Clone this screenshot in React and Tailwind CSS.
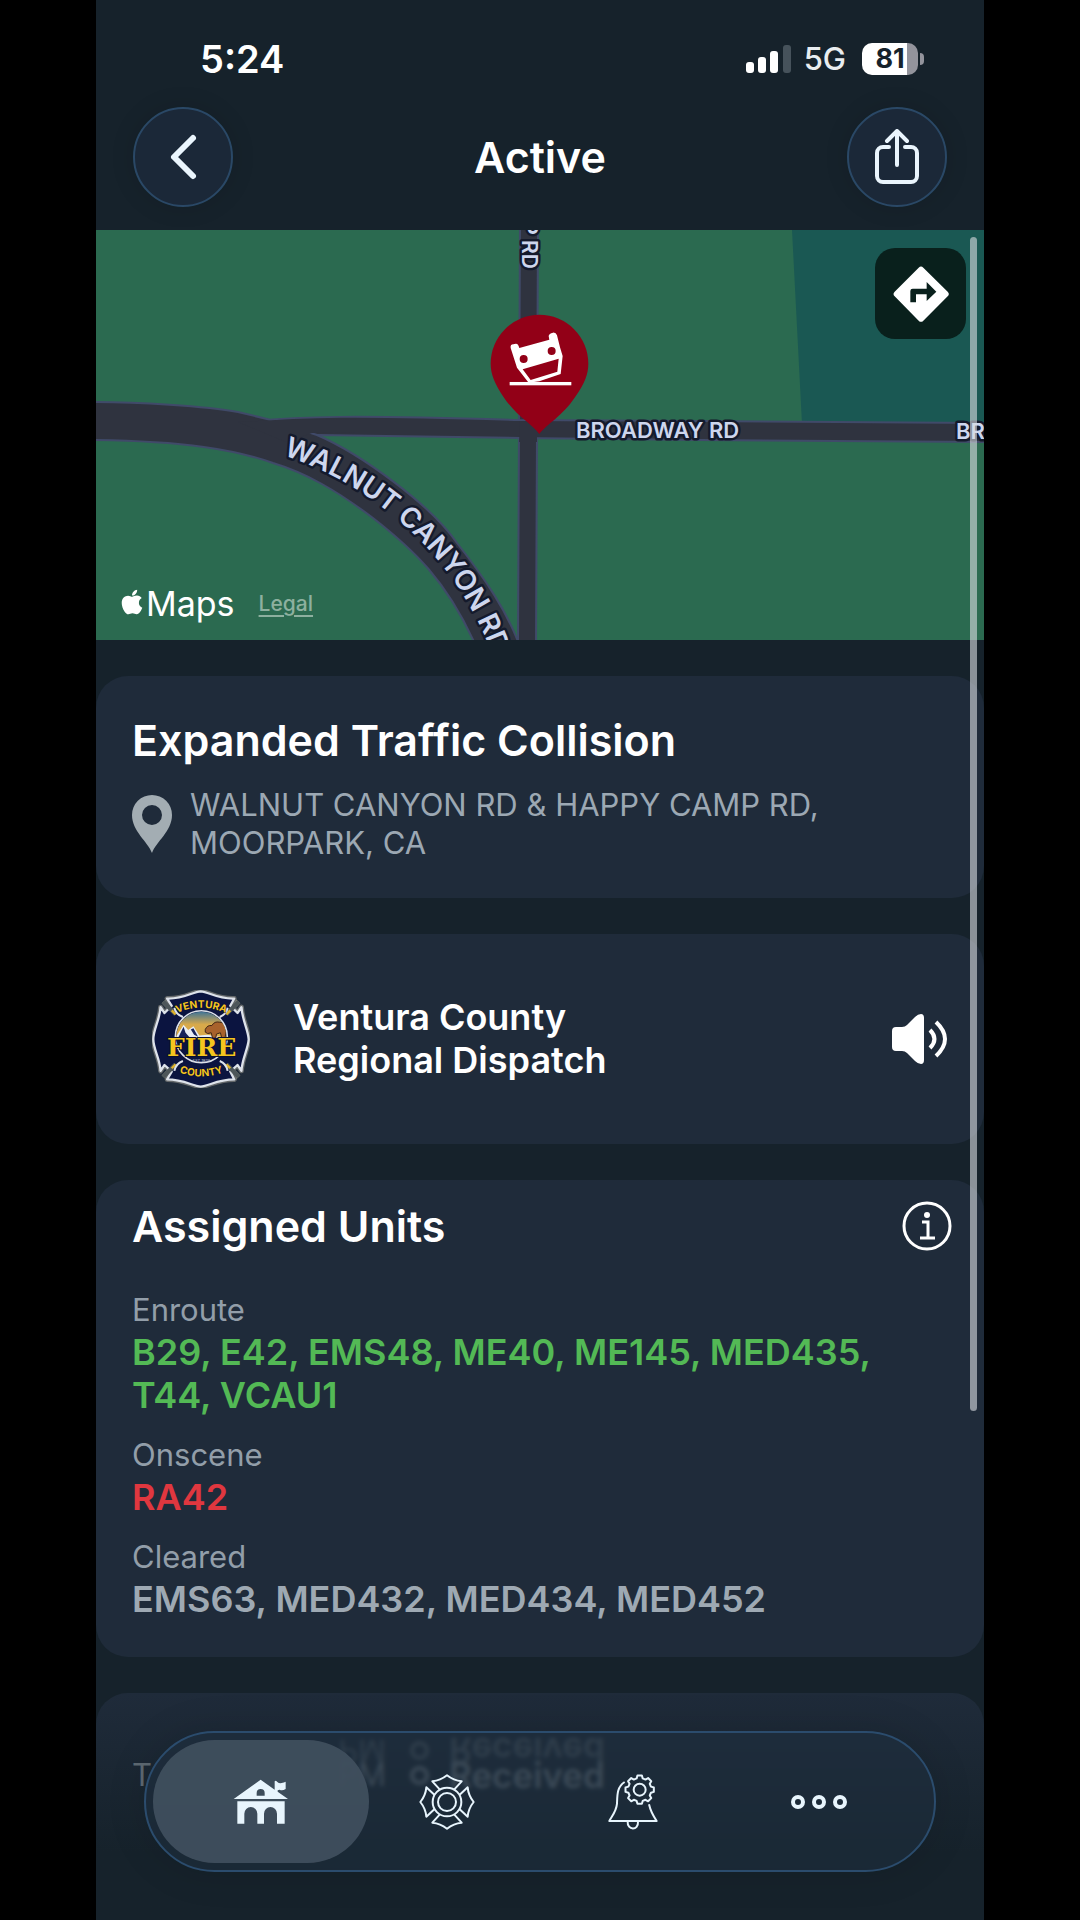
import { FaApple } from "react-icons/fa";

const GREEN = "#2b6a50";
const ROAD = "#2f333f";
const KERB = "#404a69";

function StatusBar() {
  return (
    <div className="flex h-8 items-center justify-between pr-[60px] pl-[104px]">
      <span className="text-[38px] leading-8 font-semibold">5:24</span>
      <div className="flex items-center">
        <svg className="h-[30px] w-[46px]" viewBox="0 0 46 30" fill="#fff" aria-label="Signal">
          <rect x="0" y="18" width="8" height="11" rx="3" />
          <rect x="12" y="13" width="8" height="16" rx="3" />
          <rect x="24" y="7" width="8" height="22" rx="3" />
          <rect x="37" y="1" width="8" height="28" rx="3" fill="#46525b" />
        </svg>
        <span className="ml-3 text-[31px] leading-8 font-medium text-[#e9edf0]">5G</span>
        <div className="ml-4 flex items-center gap-0.5">
          <div className="flex h-8 w-14 items-center justify-center rounded-[10px] bg-linear-to-r from-white from-81% to-[#93949c] to-81%">
            <span className="text-[27px] leading-8 font-bold text-[#16222b]">81</span>
          </div>
          <div className="h-3 w-1 rounded-r-full bg-[#93949c]" />
        </div>
      </div>
    </div>
  );
}

function RoundButton({ label, children }) {
  return (
    <button
      type="button"
      aria-label={label}
      className="flex size-[100px] items-center justify-center rounded-full border-2 border-[#2a4866] bg-[#1b2838] shadow-[0_0_24px_rgba(0,0,0,0.12)]"
    >
      {children}
    </button>
  );
}

function Header() {
  return (
    <header className="shrink-0 pt-[43px] pb-[23px]">
      <StatusBar />
      <div className="mt-8 flex items-center justify-between px-[37px]">
        <RoundButton label="Back">
          <svg className="h-12 w-8" viewBox="0 0 32 48" fill="none" stroke="#eaf5fd" strokeWidth="6" strokeLinecap="round" strokeLinejoin="round">
            <path d="M26 5 L7 24 L26 43" />
          </svg>
        </RoundButton>
        <h1 className="text-[43px] leading-[50px] font-semibold">Active</h1>
        <RoundButton label="Share">
          <svg className="h-14 w-11" viewBox="0 0 44 56" fill="none" stroke="#eaf5fd" strokeWidth="4" strokeLinecap="round" strokeLinejoin="round">
            <path d="M14 18 H8 a6 6 0 0 0 -6 6 V47 a6 6 0 0 0 6 6 H36 a6 6 0 0 0 6 -6 V24 a6 6 0 0 0 -6 -6 H30" />
            <path d="M22 36 V3 M12 12 L22 2 L32 12" />
          </svg>
        </RoundButton>
      </div>
    </header>
  );
}

function MapView() {
  const label = {
    fill: "#cdd6ee",
    stroke: "#141a2c",
    strokeWidth: 5,
    strokeLinejoin: "round",
    paintOrder: "stroke",
    fontWeight: 600,
  };
  return (
    <section className="relative h-[410px] shrink-0 overflow-hidden" aria-label="Incident map">
      <svg className="block h-full w-full" viewBox="0 0 888 410" preserveAspectRatio="xMidYMid slice">
        <rect width="888" height="410" fill={GREEN} />
        <path d="M696 0 H888 V194 H706 Z" fill="#1a5853" />
        <g fill={ROAD} stroke={KERB} strokeWidth="2">
          <path d="M424 -4 H442 L440 414 H422 Z" />
          <path d="M150 192 C200 186 260 185 424 190 L604 191 L892 193 V212 L604 210 L424 208 L221 205 L150 215 Z" />
          <path d="M-4 172 C40 172 110 176 142 182 L171 189 L221 205 C265 224 335 275 361 313 C390 350 410 380 423 414 L379 414 C350 350 318 320 277 288 C240 260 210 243 177 233 C140 220 90 211 -4 210 Z" />
        </g>
        <path d="M142 192 L180 190 L260 189 V202 L216 203 L190 212 Z" fill={ROAD} />
        <path d="M424 191 L441 191 V212 L423 212 Z" fill={ROAD} />
        <path id="walnut" d="M186 225 C260 248 325 300 364 360 Q388 398 402 440" fill="none" />
        <text {...label} fontSize="28">
          <textPath href="#walnut" startOffset="1">WALNUT CANYON RD</textPath>
        </text>
        <text {...label} fontSize="22" x="480" y="208">BROADWAY RD</text>
        <text {...label} fontSize="22" x="860" y="209">BROADWAY RD</text>
        <text {...label} fontSize="21" textAnchor="end" transform="translate(426 39) rotate(90)">HAPPY CAMP RD</text>
        <g transform="translate(364 -10) scale(.3333)">
          <path d="M238 642 C214 610 170 590 130 530 C104 490 92 462 92 431 A146.500 146.500 0 0 1 385 431 C385 462 374 490 346 530 C306 590 262 610 238 642 Z" fill="#920017" />
          <path
            fillRule="evenodd"
            fill="#fff"
            d="M152 384 Q150 374 160 373 L168 371 Q175 371 178 384 L268 359 L266 348 Q267 341 279 338 Q288 337 291 346 L300 382 L308 408 L302 462 L238 484 L206 488 L171 443 Z M179 417 a12 12 0 1 0 24 0 a12 12 0 1 0 -24 0 Z M263 393 a12 12 0 1 0 24 0 a12 12 0 1 0 -24 0 Z M188 448 L296 416 L292 455 L212 480 Z"
          />
          <rect x="149" y="486" width="185" height="10" fill="#fff" />
        </g>
      </svg>

      <button type="button" aria-label="Directions" className="absolute top-[18px] right-[18px] flex size-[91px] items-center justify-center rounded-[20px] bg-[#09201c]">
        <svg className="size-14" viewBox="576 136 168 168">
          <path d="M653 141 Q660 134 667 141 L740 213 Q747 220 740 227 L667 300 Q660 307 653 300 L581 227 Q574 220 581 213 Z" fill="#fff" />
          <path d="M628 245 V211 Q628 204 635 204 H677 V184 L706 213 L677 241 V221 H645 V245 Z" fill="#09201c" />
        </svg>
      </button>

      <div className="absolute bottom-4 left-[22px] flex items-center">
        <FaApple className="-mt-1 size-7 text-white" />
        <span className="text-[34px] leading-10">Maps</span>
        <a href="#legal" className="ml-6 text-[21px] leading-6 font-medium text-[#8db09f] underline underline-offset-4">Legal</a>
      </div>
    </section>
  );
}

function Card({ className, children }) {
  return <section className={"shrink-0 rounded-[32px] bg-[#1f2b3a] " + className}>{children}</section>;
}

function IncidentCard() {
  return (
    <Card className="px-9 pt-[38px] pb-9">
      <h2 className="text-[43px] leading-[52px] font-semibold">Expanded Traffic Collision</h2>
      <div className="mt-5 flex items-center gap-[18px]">
        <svg className="h-[58px] w-10 shrink-0" viewBox="0 0 40 58" fill="#a3adb3">
          <path fillRule="evenodd" d="M20 58 C16 47 0 36 0 20 A20 20 0 0 1 40 20 C40 36 24 47 20 58 Z M10 20 a10 10 0 1 0 20 0 a10 10 0 1 0 -20 0 Z" />
        </svg>
        <p className="max-w-[660px] text-[31px] leading-[38px] text-[#9ca8b3]">
          WALNUT CANYON RD &amp; HAPPY CAMP RD, MOORPARK, CA
        </p>
      </div>
    </Card>
  );
}

function DepartmentBadge() {
  const shape =
    "M180 34 C205 36 232 58 282 56 L270 78 L292 100 L304 82 C306 120 324 150 326 180 C324 210 306 238 304 276 L292 258 L270 278 L282 302 C232 302 205 322 180 324 C155 322 128 302 78 302 L92 278 L70 258 L58 276 C56 238 36 210 36 180 C36 150 56 120 58 82 L70 100 L92 78 L78 56 C128 58 155 36 180 34 Z";
  const gold = { fill: "#f5c51e", fontWeight: 700, textAnchor: "middle", stroke: "#0a1030", strokeWidth: 3, paintOrder: "stroke" };
  return (
    <svg className="size-[98px] shrink-0" viewBox="32 30 298 298" role="img" aria-label="Ventura County Fire">
      <defs>
        <linearGradient id="sky" x1="0" y1="0" x2="0" y2="1">
          <stop offset="0" stopColor="#2f6f9f" />
          <stop offset="0.5" stopColor="#d8a94a" />
        </linearGradient>
        <clipPath id="seal">
          <circle cx="182" cy="172" r="76" />
        </clipPath>
      </defs>
      <path d="M70 62 L292 298 M292 62 L70 298" stroke="#7c8075" strokeWidth="24" />
      <path d={shape} fill="none" stroke="#65696b" strokeWidth="15" strokeLinejoin="round" />
      <path d={shape} fill="#0b1440" stroke="#dde2ea" strokeWidth="7" strokeLinejoin="round" />
      <path d="M66 66 L104 104 M296 66 L258 104 M66 294 L104 256 M296 294 L258 256" stroke="#4d565a" strokeWidth="13" />
      <path d="M92 92 L104 104 M270 92 L258 104 M92 268 L104 256 M270 268 L258 256" stroke="#e0b32a" strokeWidth="7" />
      <path d="M100 84 Q104 104 126 112 M262 84 Q258 104 238 112 M100 276 Q104 254 126 246 M262 276 Q258 254 238 246" fill="none" stroke="#dde2ea" strokeWidth="6" />
      <circle cx="182" cy="172" r="79" fill="#0b1440" stroke="#dde2ea" strokeWidth="5" />
      <g clipPath="url(#seal)">
        <rect x="100" y="92" width="164" height="86" fill="url(#sky)" />
        <path d="M100 180 L128 136 L142 152 L158 140 L176 168 L200 166 L262 176 V182 H100 Z" fill="#e9eef5" />
        <path d="M110 178 L128 142 L134 160 L146 174 Z M150 150 L158 146 L172 172 L160 166 Z" fill="#17235a" />
        <path d="M194 150 Q200 136 214 138 Q222 124 238 128 Q258 128 258 154 L254 176 H244 L240 160 L228 164 L226 176 H216 L212 160 Q200 166 194 158 Z" fill="#a8622c" stroke="#3d2415" strokeWidth="3" />
        <path d="M100 176 H264 V190 H100 Z" fill="#0b1440" />
      </g>
      <path id="badgeTop" d="M104 102 Q182 66 260 102" fill="none" />
      <path id="badgeBottom" d="M100 274 Q182 312 264 274" fill="none" />
      <text {...gold} fontSize="31">
        <textPath href="#badgeTop" startOffset="50%">VENTURA</textPath>
      </text>
      <text {...gold} fontSize="31">
        <textPath href="#badgeBottom" startOffset="50%">COUNTY</textPath>
      </text>
      <text {...gold} x="183" y="231" fontSize="76" fontFamily="'DejaVu Serif', serif" strokeWidth="6">FIRE</text>
      <text x="182" y="249" fontSize="12" fontStyle="italic" fill="#c7cddb" textAnchor="middle">EST 1928</text>
    </svg>
  );
}

function DispatchCard() {
  return (
    <Card className="flex items-center pr-9 pl-14">
      <div className="flex h-[210px] flex-1 items-center gap-[43px]">
        <DepartmentBadge />
        <p className="max-w-[350px] text-[36px] leading-[43px] font-semibold">Ventura County Regional Dispatch</p>
      </div>
      <button type="button" aria-label="Listen to dispatch audio">
        <svg className="h-[50px] w-14" viewBox="0 0 56 50">
          <path d="M0 17 Q0 13 4 13 H10 Q13 13 15 11 L23 3 Q26 0 29 0 Q32 0 32 4 V46 Q32 50 29 50 Q26 50 23 47 L15 39 Q13 37 10 37 H4 Q0 37 0 33 Z" fill="#fff" />
          <path d="M38 16 Q47 25 38 34 M44 8 Q62 25 44 42" fill="none" stroke="#fff" strokeWidth="4" />
        </svg>
      </button>
    </Card>
  );
}

const GROUPS = [
  { title: "Enroute", units: "B29, E42, EMS48, ME40, ME145, MED435, T44, VCAU1", color: "text-[#53b955]" },
  { title: "Onscene", units: "RA42", color: "text-[#e0373f]" },
  { title: "Cleared", units: "EMS63, MED432, MED434, MED452", color: "text-[#9ea9b3]" },
];

function UnitsCard() {
  return (
    <Card className="px-9 pt-5 pb-9">
      <div className="flex items-center justify-between">
        <h2 className="text-[43px] leading-[52px] font-semibold">Assigned Units</h2>
        <button type="button" aria-label="About assigned units" className="-mr-1">
          <svg className="size-[50px]" viewBox="0 0 50 50" fill="none" stroke="#fff" strokeWidth="3">
            <circle cx="25" cy="25" r="23" />
            <circle cx="25" cy="14" r="3" fill="#fff" stroke="none" />
            <path d="M20 21 H26 V37 M18 37 H33" />
          </svg>
        </button>
      </div>
      <dl className="mt-9 flex flex-col gap-4">
        {GROUPS.map((g) => (
          <div key={g.title}>
            <dt className="text-[31px] leading-[43px] text-[#929ea9]">{g.title}</dt>
            <dd className={"max-w-[760px] text-[36px] leading-[43px] font-semibold " + g.color}>{g.units}</dd>
          </div>
        ))}
      </dl>
    </Card>
  );
}

function TimelineRow({ reflected }) {
  return (
    <div className="flex h-10 items-center leading-10">
      <div className="flex w-[254px] justify-between">
        <span>{reflected ? "" : "T"}</span>
        <span>PM</span>
      </div>
      <span className="ml-6 size-[19px] rounded-full border-4 border-current" />
      <span className="ml-5 text-[35px] font-semibold">Received</span>
    </div>
  );
}

function TimelineCard() {
  return (
    <section className="h-[226px] shrink-0 rounded-t-[32px] bg-linear-to-b from-[#1f2b3a] to-[#16222b] to-70% px-9 pt-[38px] text-[31px] text-[#5d6972]">
      <div className="-scale-y-100 opacity-60" aria-hidden="true">
        <TimelineRow reflected />
      </div>
      <div className="-mt-4">
        <TimelineRow />
      </div>
    </section>
  );
}

function StationIcon() {
  return (
    <svg className="h-[46px] w-14" viewBox="341 192 168 138" fill="#e8f5fd">
      <path fillRule="evenodd" d="M343 252 L424 194 L466 224 V199 Q470 195 473 200 Q480 206 487 204 Q494 203 499 200 V222 Q488 229 481 224 L475 226 V230 L506 252 Z M412 242 H436 V234 A12 12 0 0 0 412 234 Z" />
      <path d="M354 259 H496 V326 H473 V296 A19.500 20 0 0 0 434 296 V326 H414 V296 A19.500 20 0 0 0 375 296 V326 H354 Z" />
    </svg>
  );
}

function MalteseIcon() {
  return (
    <svg className="size-14" viewBox="268 176 168 168" fill="none" stroke="#e8f5fd" strokeWidth="6" strokeLinejoin="round">
      <circle cx="352" cy="260" r="43" />
      <circle cx="352" cy="260" r="27" />
      {[0, 90, 180, 270].map((a) => (
        <path key={a} transform={`rotate(${a} 352 260)`} d="M330 222 L308 198 Q332 196 352 180 Q372 196 396 198 L374 222" />
      ))}
    </svg>
  );
}

const GEAR = Array.from({ length: 8 }, (_, i) =>
  [[-15, 35], [-9, 43], [9, 43], [15, 35]].map(([deg, r], j) => {
    const t = ((i * 45 + deg) * Math.PI) / 180;
    return `${i || j ? "L" : "M"}${(330 + r * Math.sin(t)).toFixed(1)} ${(358 - r * Math.cos(t)).toFixed(1)}`;
  }).join(" ")
).join(" ") + " Z";

function AlertsIcon() {
  return (
    <svg className="size-14" viewBox="226 311 168 168" fill="none" stroke="#e8f5fd" strokeWidth="6" strokeLinejoin="round">
      <path d={GEAR} />
      <circle cx="330" cy="358" r="18" />
      <path d="M285 335 C262 350 263 372 262 400 C260 424 246 438 239 452 H381 C370 436 362 420 358 402" />
      <path d="M294 454 C292 480 327 482 325 454" />
    </svg>
  );
}

function MoreIcon() {
  return (
    <svg className="h-4 w-14" viewBox="0 0 56 16" fill="none" stroke="#e8f5fd" strokeWidth="4">
      <circle cx="7" cy="8" r="5" />
      <circle cx="28" cy="8" r="5" />
      <circle cx="49" cy="8" r="5" />
    </svg>
  );
}

const TABS = [
  { label: "Incidents", Icon: StationIcon, active: true },
  { label: "Agencies", Icon: MalteseIcon },
  { label: "Alerts", Icon: AlertsIcon },
  { label: "More", Icon: MoreIcon },
];

function TabBar() {
  return (
    <nav className="absolute inset-x-12 bottom-12 grid h-[141px] grid-cols-4 rounded-full border-2 border-[#2b4c6d] bg-[#1f2f3f]/55 px-[22px] py-[7px] shadow-[0_0_40px_rgba(0,0,0,0.12)] backdrop-blur-[2px]">
      {TABS.map(({ label, Icon, active }) => (
        <button key={label} type="button" aria-label={label} aria-current={active ? "page" : undefined} className="relative flex items-center justify-center">
          {active && <span className="absolute -inset-x-[15px] inset-y-0 rounded-full bg-[#404f5e]/95" />}
          <span className="relative">
            <Icon />
          </span>
        </button>
      ))}
    </nav>
  );
}

export default function App() {
  return (
    <div className="h-screen bg-black px-24 font-['Inter',sans-serif] text-white">
      <div className="relative flex h-full flex-col overflow-hidden bg-[#16222b]">
        <Header />
        <main className="relative flex min-h-0 flex-1 flex-col gap-9 overflow-hidden">
          <MapView />
          <IncidentCard />
          <DispatchCard />
          <UnitsCard />
          <TimelineCard />
          <div className="absolute top-[7px] right-[7px] h-[1174px] w-[7px] rounded-full bg-[#dadde2]/60" />
        </main>
        <TabBar />
      </div>
    </div>
  );
}
